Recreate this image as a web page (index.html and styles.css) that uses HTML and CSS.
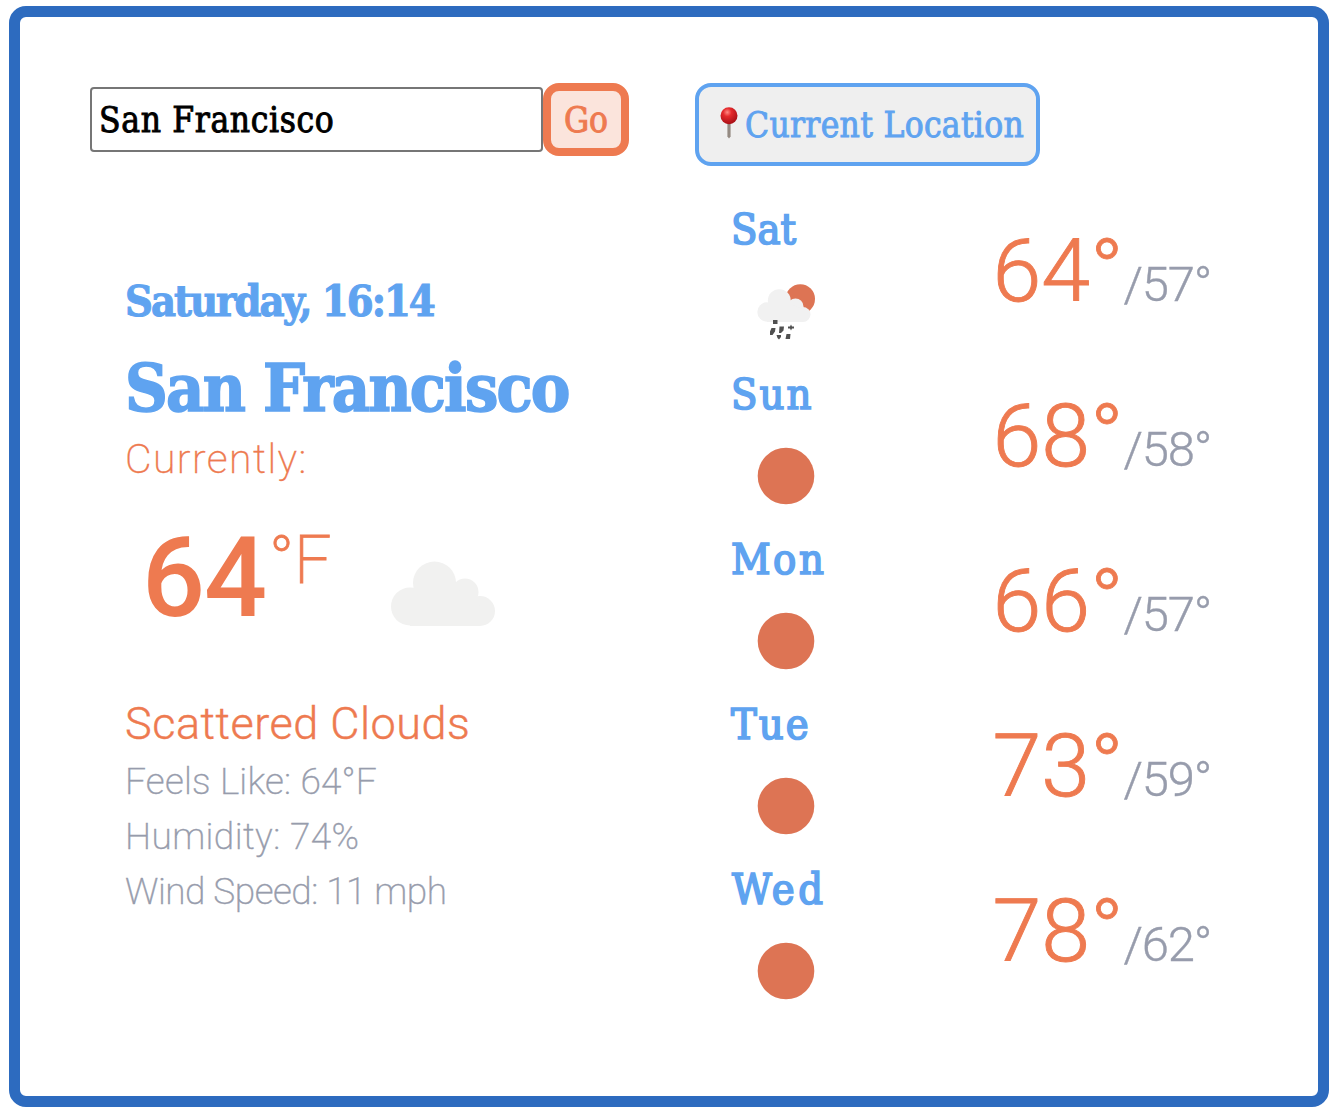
FILE: index.html
```
<!DOCTYPE html>
<html lang="en">
<head>
<meta charset="utf-8">
<title>Weather</title>
<link rel="stylesheet" href="styles.css">
</head>
<body>
<main class="app">
  <section class="left">
    <form class="search">
      <input class="city-input" type="text" value="San Francisco" aria-label="City">
      <button class="go" type="button">Go</button>
    </form>
    <div class="current">
      <h3 class="date">Saturday, 16:14</h3>
      <h1 class="city">San Francisco</h1>
      <p class="currently">Currently:</p>
      <div class="now">
        <span class="temp">64</span>
        <span class="unit">°F</span>
        <svg class="cloud" viewBox="0 0 104 65" fill="#f1f1f0">
          <circle cx="19" cy="45.500" r="19"/><circle cx="43.500" cy="22" r="21.500"/><circle cx="74" cy="31" r="13.500"/><circle cx="89" cy="50" r="15"/>
          <path d="M19 28H60L76 31L89 45V65H19Z"/>
        </svg>
      </div>
      <h2 class="description">Scattered Clouds</h2>
      <ul class="details">
        <li class="feels">Feels Like: 64°F</li>
        <li class="humidity">Humidity: 74%</li>
        <li class="wind">Wind Speed: 11 mph</li>
      </ul>
    </div>
  </section>
  <section class="right">
    <button class="location" type="button">
      <svg class="pin" viewBox="0 0 18 32">
        <defs><radialGradient id="red" cx=".4" cy=".3" r=".7"><stop offset="0" stop-color="#ff8a84"/><stop offset=".35" stop-color="#e52a2c"/><stop offset="1" stop-color="#a80f16"/></radialGradient></defs>
        <path d="M7.400 15h3.200v14.500L9 31.500l-1.600-2z" fill="#948a82"/>
        <circle cx="9" cy="8.700" r="8.500" fill="url(#red)"/>
      </svg>
      <span class="location-label">Current Location</span>
    </button>
    <ul class="forecast">
      <li class="day">
        <div><h4 class="name">Sat</h4>
          <svg class="icon" viewBox="0 0 60 60">
            <circle cx="43.300" cy="18" r="14.700" fill="#dd7454"/>
            <g fill="#f1f1f1"><circle cx="10" cy="31" r="9.700"/><circle cx="22.300" cy="19.700" r="11.500"/><circle cx="38.500" cy="25.500" r="8"/><circle cx="46" cy="33.500" r="7.500"/><path d="M10 24h26l10 4v13H10z"/></g>
            <path d="M16 39h4.500v4h-4.500zM14.500 47h4l-.5 3.500-2.500 3.500h-2.500v-3.500zM22.500 45.500h4.500l-.5 4-2.500 2.500h-2zM34 43.500l1 2h2v2h-2l-1 2-1-2h-2v-2h2zM19.500 54h4.500v2l-2 2.500-1.500-1.500zM29.500 53h4l-.5 5h-4.500z" fill="#505050"/>
          </svg></div>
        <p class="range"><span class="max">64°</span><span class="min">/57°</span></p>
      </li>
      <li class="day">
        <div><h4 class="name sun">Sun</h4><svg class="icon" viewBox="0 0 60 60"><circle cx="29" cy="30" r="28.300" fill="#dd7454"/></svg></div>
        <p class="range"><span class="max">68°</span><span class="min">/58°</span></p>
      </li>
      <li class="day">
        <div><h4 class="name wide">Mon</h4><svg class="icon" viewBox="0 0 60 60"><circle cx="29" cy="30" r="28.300" fill="#dd7454"/></svg></div>
        <p class="range"><span class="max">66°</span><span class="min">/57°</span></p>
      </li>
      <li class="day">
        <div><h4 class="name sun">Tue</h4><svg class="icon" viewBox="0 0 60 60"><circle cx="29" cy="30" r="28.300" fill="#dd7454"/></svg></div>
        <p class="range"><span class="max">73°</span><span class="min">/59°</span></p>
      </li>
      <li class="day">
        <div><h4 class="name wed">Wed</h4><svg class="icon" viewBox="0 0 60 60"><circle cx="29" cy="30" r="28.300" fill="#dd7454"/></svg></div>
        <p class="range"><span class="max">78°</span><span class="min">/62°</span></p>
      </li>
    </ul>
  </section>
</main>
</body>
</html>
```
FILE: styles.css
```
* { box-sizing: border-box; margin: 0; padding: 0; }
:root {
  --slab: "Roboto Slab", "DejaVu Serif Condensed", "DejaVu Serif", serif;
  --light: "Roboto Slab", Roboto, sans-serif;
  --blue: #5fa3f0;
  --orange: #ee7a50;
  --gray: #979cac;
}
body { background: #fff; padding: 6px 9px 0; }
ul { list-style: none; }
svg { display: block; }
.app {
  display: flex;
  width: 1320px;
  height: 1101px;
  padding: 66px 70px 0;
  border: 11px solid #2d6bbf;
  border-radius: 17px;
}
.left { width: 605px; }
.search { display: flex; height: 83px; align-items: flex-start; }
.city-input {
  width: 453px;
  height: 65px;
  margin-top: 4px;
  padding: 0 7px;
  border: 2px solid #767676;
  border-radius: 4px;
  background: #fff;
  font: 500 35px var(--slab);
  letter-spacing: .65px;
  color: #000;
  -webkit-text-stroke: .9px #000;
}
.go {
  width: 86px;
  height: 73px;
  border: 8px solid var(--orange);
  border-radius: 16px;
  background: #fbe4dc;
  color: var(--orange);
  font: 500 35px var(--slab);
  -webkit-text-stroke: .9px var(--orange);
}
.current { padding: 106px 0 0 35px; }
.date {
  font: 700 43px/58px var(--slab);
  height: 60px;
  letter-spacing: -2px;
  color: var(--blue);
  -webkit-text-stroke: 1px var(--blue);
}
.city {
  margin-top: 17px;
  font: 700 66px/78px var(--slab);
  height: 80px;
  letter-spacing: -1.8px;
  color: var(--blue);
  -webkit-text-stroke: 1.5px var(--blue);
}
.currently {
  font: 200 41px/60px var(--light);
  letter-spacing: 1.4px;
  color: var(--orange);
  -webkit-text-stroke: .3px var(--orange);
}
.now {
  display: flex;
  height: 112px;
  margin: 33px 0 60px 17px;
  align-items: flex-start;
  color: var(--orange);
}
.temp { width: 127px; font: 500 111px/112px var(--light); letter-spacing: -1px; }
.unit { width: 122px; font: 200 66px/78px var(--light); -webkit-text-stroke: .8px var(--orange); }
.cloud { width: 104px; height: 65px; margin-top: 39px; }
.description {
  font: 300 45px/60px var(--light);
  letter-spacing: .5px;
  color: var(--orange);
  -webkit-text-stroke: .4px var(--orange);
}
.details {
  font: 200 37px/55px var(--light);
  color: var(--gray);
  -webkit-text-stroke: .4px var(--gray);
}
.feels { letter-spacing: .2px; }
.humidity { letter-spacing: .4px; }
.wind { letter-spacing: -.5px; }
.location {
  display: flex;
  width: 345px;
  height: 83px;
  align-items: center;
  padding-left: 21px;
  border: 4px solid var(--blue);
  border-radius: 16px;
  background: #efefef;
  color: var(--blue);
  font: 500 35px var(--slab);
  -webkit-text-stroke: .9px var(--blue);
}
.pin { width: 18px; height: 32px; margin: 0 7px 4px 0; flex: none; }
.location-label { white-space: nowrap; letter-spacing: .3px; }
.forecast { padding: 34px 0 0 35px; }
.day { display: flex; height: 165px; width: 481px; justify-content: space-between; }
.name {
  height: 60px;
  padding-left: 1px;
  font: 500 43px/58px var(--slab);
  color: var(--blue);
  -webkit-text-stroke: 1.7px var(--blue);
}
.sun { letter-spacing: 2px; }
.wide { letter-spacing: 2.500px; }
.wed { padding-left: 2px; letter-spacing: 3.500px; }
.icon { width: 60px; height: 60px; margin: 21px 0 0 27px; }
.range {
  display: flex;
  height: 100px;
  margin-top: 20px;
  align-items: baseline;
}
.max { font: 300 88px/101px var(--light); color: var(--orange); -webkit-text-stroke: .9px var(--orange); }
.min { font: 300 49px/60px var(--light); letter-spacing: -1.2px; color: var(--gray); -webkit-text-stroke: .4px var(--gray); }
```
